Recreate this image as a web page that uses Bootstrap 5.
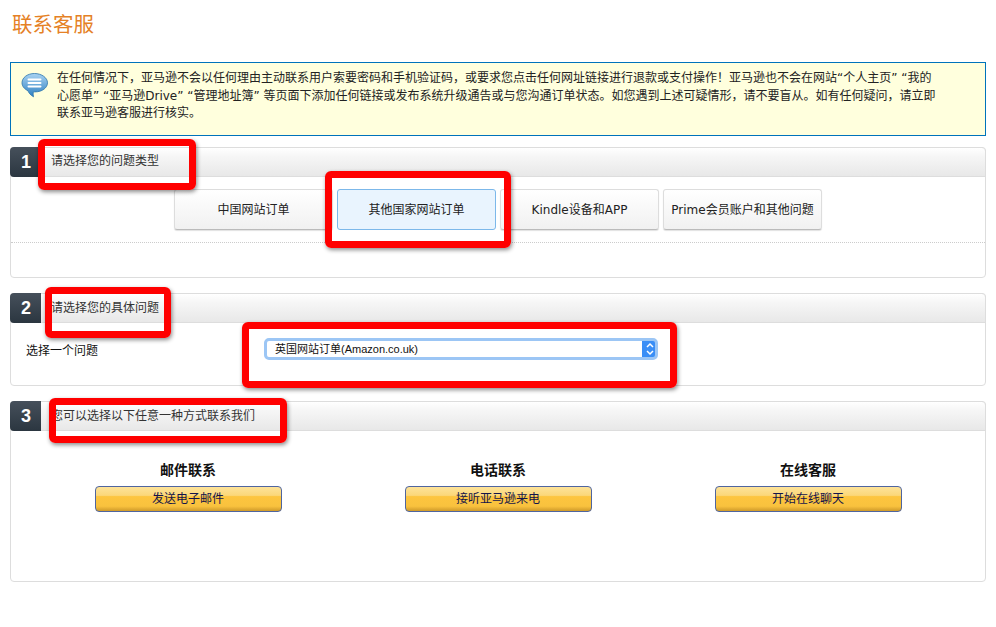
<!DOCTYPE html>
<html lang="zh-CN">
<head>
<meta charset="utf-8">
<title>联系客服</title>
<link rel="stylesheet" href="https://cdn.jsdelivr.net/npm/bootstrap@5.3.0/dist/css/bootstrap.min.css">
<style>
html,body{height:627px;overflow:hidden}
body{background:#fff;color:#111;font:12px/17px "DejaVu Sans","Noto Sans CJK SC",sans-serif}
.page-wrap{position:relative;height:627px;padding:0 10px}
.page-title{color:#e58125;font-size:20.5px;line-height:24px;font-weight:400;margin:0;padding:13px 2px 0;height:62px;font-family:"Liberation Sans","Noto Sans CJK SC",sans-serif}
.notice{height:74px;border:1px solid #0073bb;background:#ffd;padding:7px 46px 0 46px;margin-bottom:11px;font-size:12px;line-height:17.5px;color:#222;position:relative}
.notice-icon{position:absolute;left:10px;top:9px}
.step-box{border:1px solid #ddd;border-radius:4px;margin-bottom:15px;background:#fff}
.step-one{height:131px}.step-two{height:93px}.step-three{height:181px;margin-bottom:0}
.step-head{height:30px;margin:-1px -1px 0;border:1px solid #ddd;border-radius:4px 4px 0 0;background:linear-gradient(#fff,#f6f6f6 30%,#e8e8e8);color:#333}
.step-num{width:31px;height:30px;padding-left:1px;margin:-1px 0 -1px -1px;flex:none;border-radius:4px 0 0 4px;background:linear-gradient(#46505b,#2b3640);color:#fff;font-size:18px;font-weight:700;font-family:"Liberation Sans",sans-serif;line-height:30px;text-align:center}
.step-label{padding-left:10px;line-height:27px}
.step-two .step-label,.step-three .step-label{line-height:29px}
.tab-row{padding:12px 0 11px;gap:4px;border-bottom:1px dotted #ccc;height:66px}
.tab-btn{width:159px;height:41px;padding:2px 0 0;font-size:12px;line-height:37px;color:#222;border:1px solid #ddd;border-bottom-color:#bbb;border-radius:3px;background:linear-gradient(#fff,#f1f1f1);box-shadow:0 1px 1px rgba(0,0,0,.12)}
.tab-btn.tab-on{background:#e9f4fe;border-color:#7cb8ea;box-shadow:none}
.q-row{padding:20px 0 0 15px}
.q-label{width:238px;line-height:17px}
.q-select{width:394px;height:22px;padding:0 24px 0 8px;font-family:"Liberation Sans","Noto Sans CJK SC",sans-serif;font-size:11px;line-height:16px;color:#111;border:3px solid #9cc6f5;border-radius:5px;background-color:#fff;background-image:url("data:image/svg+xml,%3Csvg xmlns='http://www.w3.org/2000/svg' width='16' height='22'%3E%3Crect width='16' height='22' rx='3' fill='%233a8ef6'/%3E%3Cpath d='M5 9l3-3 3 3M5 13l3 3 3-3' fill='none' stroke='%23fff' stroke-width='1.5'/%3E%3C/svg%3E");background-repeat:no-repeat;background-position:right -3px top -3px;background-size:16px 22px;margin-top:-5px;box-shadow:none}
.way-row{padding:29px 22px 0}
.way-col{width:310px}
.way-title{font-size:14px;line-height:20px;font-weight:700;color:#111;margin:0 0 6px;text-align:center}
.way-btn{display:block;width:187px;height:26px;margin:0 auto;padding:0;font-size:12px;line-height:22px;color:#14144a;border:1px solid #4f659f;border-radius:4px;background:linear-gradient(#fde39a 0,#fbd779 35%,#fdc53f 40%,#f9c23e 80%,#cf9a2a 100%)}
.red-frame{position:absolute;border:7px solid #f00;border-radius:6px;box-shadow:1px 2px 4px rgba(0,0,0,.45);pointer-events:none}
.rf-a{left:38px;top:139px;width:158px;height:51px}
.rf-b{left:325px;top:171px;width:186px;height:77px}
.rf-c{left:45px;top:287px;width:126px;height:51px}
.rf-d{left:242px;top:322px;width:435px;height:66px}
.rf-e{left:49px;top:398px;width:238px;height:45px}
</style>
</head>
<body>
<div class="page-wrap">
  <h1 class="page-title">联系客服</h1>
  <div class="notice">
    <svg class="notice-icon" width="27" height="27" viewBox="0 0 27 27" aria-hidden="true">
      <defs><linearGradient id="bub" x1="0" y1="0" x2="0" y2="1"><stop offset="0" stop-color="#a9d3f2"/><stop offset="1" stop-color="#2d7fc1"/></linearGradient></defs>
      <path d="M13.5 1.5C6.5 1.5 1 5.6 1 10.8c0 3.4 2.4 6.3 6 8 .5 1.700 2 4 5.500 6-.4-2-.5-3.500-.2-5 .7.100 1 .1 1.700.1 7 0 12.500-4 12.500-9.100S20.500 1.500 13.500 1.500z" fill="url(#bub)" stroke="#2a73ad" stroke-width=".8"/>
      <rect x="6.500" y="6.500" width="14" height="2" rx="1" fill="#fff"/><rect x="6.500" y="10" width="14" height="2" rx="1" fill="#fff"/><rect x="6.500" y="13.500" width="14" height="2" rx="1" fill="#fff"/>
    </svg>
    在任何情况下，亚马逊不会以任何理由主动联系用户索要密码和手机验证码，或要求您点击任何网址链接进行退款或支付操作！亚马逊也不会在网站“个人主页” “我的<br>
    心愿单” “亚马逊Drive” “管理地址簿” 等页面下添加任何链接或发布系统升级通告或与您沟通订单状态。如您遇到上述可疑情形，请不要盲从。如有任何疑问，请立即<br>
    联系亚马逊客服进行核实。
  </div>

  <section class="step-box step-one">
    <div class="step-head d-flex"><div class="step-num">1</div><div class="step-label">请选择您的问题类型</div></div>
    <div class="tab-row d-flex justify-content-center">
      <button type="button" class="btn tab-btn">中国网站订单</button>
      <button type="button" class="btn tab-btn tab-on">其他国家网站订单</button>
      <button type="button" class="btn tab-btn">Kindle设备和APP</button>
      <button type="button" class="btn tab-btn">Prime会员账户和其他问题</button>
    </div>
  </section>

  <section class="step-box step-two">
    <div class="step-head d-flex"><div class="step-num">2</div><div class="step-label">请选择您的具体问题</div></div>
    <div class="q-row d-flex align-items-start">
      <div class="q-label">选择一个问题</div>
      <select class="form-select q-select"><option>英国网站订单(Amazon.co.uk)</option></select>
    </div>
  </section>

  <section class="step-box step-three">
    <div class="step-head d-flex"><div class="step-num">3</div><div class="step-label">您可以选择以下任意一种方式联系我们</div></div>
    <div class="way-row d-flex">
      <div class="way-col"><h2 class="way-title">邮件联系</h2><button type="button" class="btn way-btn">发送电子邮件</button></div>
      <div class="way-col"><h2 class="way-title">电话联系</h2><button type="button" class="btn way-btn">接听亚马逊来电</button></div>
      <div class="way-col"><h2 class="way-title">在线客服</h2><button type="button" class="btn way-btn">开始在线聊天</button></div>
    </div>
  </section>

  <div class="red-frame rf-a"></div>
  <div class="red-frame rf-b"></div>
  <div class="red-frame rf-c"></div>
  <div class="red-frame rf-d"></div>
  <div class="red-frame rf-e"></div>
</div>
</body>
</html>
